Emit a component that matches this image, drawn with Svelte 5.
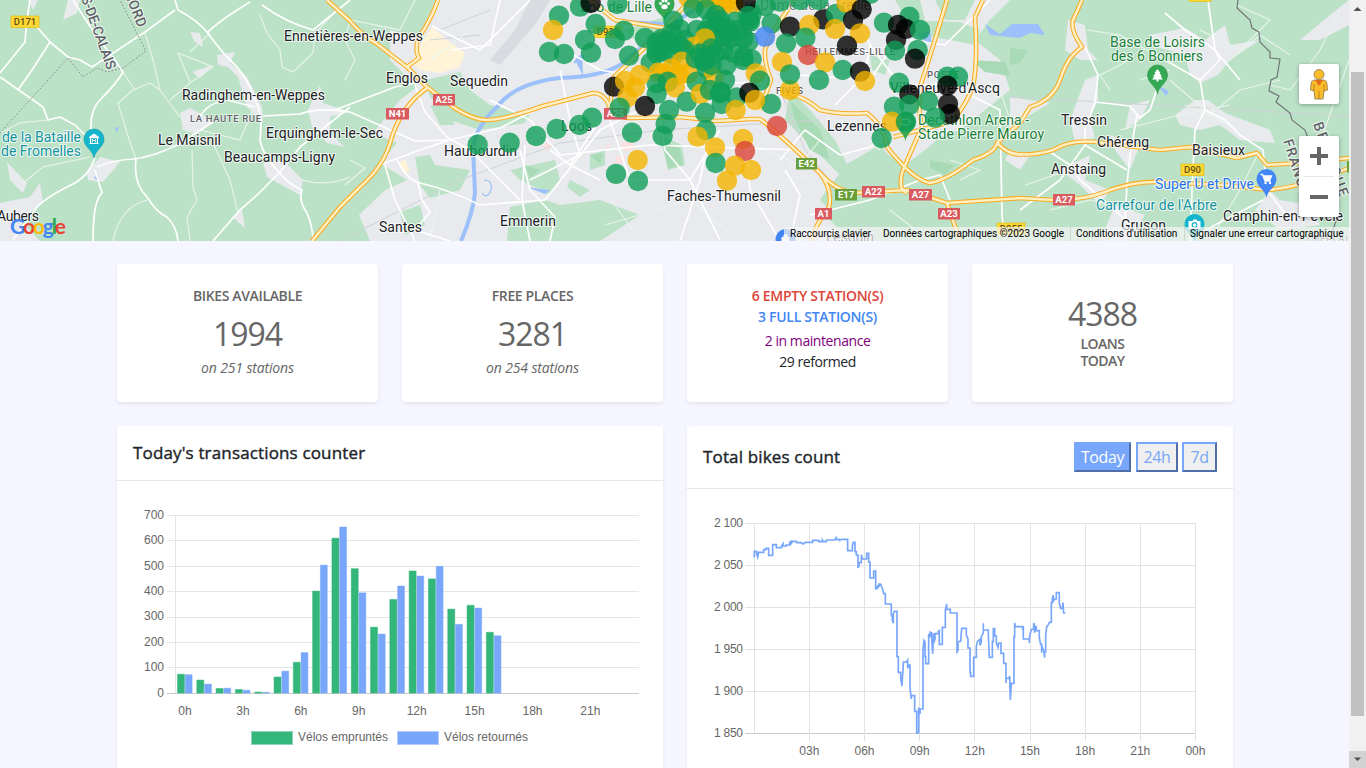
<script>
  const colors = { g: '#0f9d58', y: '#f4b400', k: '#000000', r: '#db4437', b: '#4285f4' };

  // Stations are grouped by district; each group has an origin and third-of-pixel offsets.
  const districts = [
    {
      x: 340, y: 0,
      pts: 'g413,434 g509,428 g657,47 y639,90'
    },
    {
      x: 530, y: 0,
      pts: 'g150,20 k182,9 g197,72 g262,12 g165,120 g183,158 g57,156 g102,162 g282,92 g255,117 g297,167 g345,114 ' +
        'y475,-8 y505,2 y540,-6 y570,8 y600,-4 y580,15 y555,-10 y610,10 g430,62 g425,100 g395,116 g380,128 g362,188 g398,155 g380,160 g380,150 g450,88 g465,120 g430,165 g405,135 g408,120 ' +
        'g490,25 g528,28 g558,45 g560,75 g545,65 g590,85 g615,65 g658,60 g665,42 g655,125 g625,90 g600,115 g575,110 g550,100 g500,90 g570,60 g530,92 g595,100 g640,115 ' +
        'y492,140 g530,140 g462,148 g450,140 y525,115 y400,220 y425,205 y455,185 y475,220 y385,218 y447,225 g497,175 g522,185 g530,205 y550,230 g510,160 g525,180 g555,160 g580,150 g545,145 g610,158 ' +
        'g640,180 g590,195 g665,178 g640,170 g545,195 g585,240 g500,245 g380,250 g413,245 y435,262 g380,282 g470,305 y512,282 g540,270 g573,275 g570,280 g575,312 g620,292 y617,330 ' +
        'g525,338 g417,330 g407,372 g398,408 k252,260 y285,243 y330,225 y315,262 y292,292 g269,323 k345,318 g186,353 g148,375 g80,387 g18,408 g306,398 ' +
        'y323,480 g258,522 g324,543 g528,390 y503,410 y555,442 g557,489 y639,417 r645,453 y615,497 y663,510 y591,542 k648,8'
    },
    {
      x: 740, y: 0,
      pts: 'g75,18 g30,65 g25,48 g95,70 g120,5 g180,0 g235,0 k150,80 k250,58 y208,75 g288,42 y320,8 g390,-18 k365,28 k339,60 y285,87 y360,100 g196,113 g138,130 b75,110 ' +
        'k321,137 r204,165 y255,187 y126,186 y150,270 g150,223 g237,240 g308,210 k360,215 y375,243 g93,312 r111,378 y47,220 g60,242 k28,278 y45,300 ' +
        'g432,68 g508,50 k474,75 k497,87 g540,90 k468,120 g465,152 g533,150 k525,176 g477,248 k508,283 g564,303 g622,230 g654,230 k622,257 k624,312 ' +
        'k630,342 g585,353 g462,320 g508,315 y456,365 g498,365 g425,414'
    }
  ];
  const stations = districts.flatMap((d) =>
    d.pts.split(' ').map((s) => {
      const [a, b] = s.slice(1).split(',').map(Number);
      return { c: colors[s[0]], x: d.x + a / 3, y: d.y + b / 3 };
    })
  );

  const towns = [
    ['Ennetières-en-Weppes', 284, 41, 139], ['Radinghem-en-Weppes', 182, 100, 143], ['Le Maisnil', 158, 145, 63],
    ['Erquinghem-le-Sec', 266, 138, 117], ['Beaucamps-Ligny', 224, 162, 111], ['Aubers', -3, 221, 42],
    ['Englos', 386, 83, 42], ['Sequedin', 450, 86, 58], ['Haubourdin', 444, 156, 73], ['Loos', 561, 131, 31],
    ['Santes', 379, 232, 43], ['Emmerin', 500, 226, 56], ['Faches-Thumesnil', 667, 201, 114],
    ['Lezennes', 827, 131, 60], ["Villeneuve-d'Ascq", 890, 93, 110], ['Tressin', 1061, 125, 46],
    ['Chéreng', 1097, 147, 52], ['Baisieux', 1192, 155, 53], ['Anstaing', 1051, 174, 55],
    ['Camphin-en-Pévèle', 1223, 221, 120], ['Gruson', 1121, 230, 45], ['Lesquin', 826, 242, 48]
  ];
  const faded = [['Notre-Dame-de-la-Treille', 722, 10, 149], ['Lille', 676, 66, 33]];
  const areas = [
    ['LA HAUTE RUE', 190, 122, 71], ['HELLEMMES-LILLE', 805, 55, 90], ['POSTE', 927, 78, 32], ['FIVES', 776, 94, 27], ['LILLE', 727, 34, 28], ['CREPLAINE', 1307, 242, 54]
  ];
  const pois = [
    ['de la Bataille', 2, 142, 79, '#12939e'], ['de Fromelles', 1, 156, 80, '#12939e'],
    ['Zoo de Lille', 580, 12, 72, '#188038'],
    ['Base de Loisirs', 1110, 47, 95, '#188038'], ['des 6 Bonniers', 1111, 61, 92, '#188038'],
    ['Decathlon Arena -', 918, 125, 111, '#188038'], ['Stade Pierre Mauroy', 918, 139, 126, '#188038'],
    ['Super U et Drive', 1155, 189, 99, '#1a73e8'], ["Carrefour de l'Arbre", 1096, 210, 121, '#12939e']
  ];
  const shields = [
    ['D171', 11, 16, 28, 'd'], ['A25', 433, 94, 22, 'a'], ['N41', 386, 108, 23, 'a'], ['D933', 594, 26, 28, 'd'],
    ['A25', 604, 108, 23, 'a'], ['E42', 796, 158, 21, 'e'], ['E17', 835, 189, 22, 'e'], ['A22', 862, 186, 23, 'a'],
    ['A27', 909, 189, 23, 'a'], ['A1', 815, 208, 17, 'a'], ['A23', 938, 208, 22, 'a'], ['A27', 1053, 194, 22, 'a'],
    ['D90', 1181, 164, 23, 'd'], ['D955', 997, 223, 28, 'd'], ['', 1189, -10, 22, 'd'], ['', 1347, 161, 10, 'e']
  ];
  const shieldFill = { d: '#fdd835', a: '#d95b5f', e: '#689f38' };

  const majors = [
    // western motorway, north spur and southern branch
    'M327 0L349 20Q365 38 377 44L407 67L427 87L453 107Q473 120 487 120Q503 120 543 106L593 93Q605 93 610 108Q614 117 630 118L680 117L717 121L750 119L760 119Q775 130 820 173Q835 190 853 193L907 190L947 203L1020 198L1053 200Q1087 200 1110 190Q1137 181 1157 182L1223 185L1270 190Q1310 185 1349 168',
    'M438 0Q430 22 419 37Q414 50 419 58L407 67',
    'M427 88Q400 107 390 143Q383 167 360 187L340 207Q325 225 312 241',
    'M610 108L613 78L665 28L690 0', 'M665 28L615 20L590 0', 'M820 173Q833 190 829 207Q815 225 811 241', 'M947 203L960 241',
    'M947 0Q930 57 920 87Q918 110 922 127Q907 160 902 173Q898 190 907 193',
    'M983 0L975 17Q978 60 973 87Q960 117 947 123L893 137',
    'M795 0Q770 33 765 50Q764 63 771 80L760 110', 'M780 93Q800 93 820 110Q840 115 867 113Q885 127 887 147Q913 180 930 183Q947 180 973 160Q995 153 997 143L1020 123L1030 107Q1053 100 1060 80Q1067 57 1082 47Q1070 30 1073 20L1082 0',
    'M1010 153Q1030 157 1053 150Q1073 138 1103 143L1160 150L1190 147L1237 158L1257 153L1267 165L1300 163L1349 158',
    'M997 143Q1010 156 1022 154'
  ];
  const minors = [
    'M175 0L178 10Q197 20 207 32Q220 50 230 60Q247 75 255 100Q263 113 260 140Q263 157 280 173Q287 183 302 190Q298 200 307 213Q313 227 313 241',
    'M0 73L25 42L27 20L30 0', 'M73 0L97 37L115 60L123 72Q117 83 100 100Q90 110 91 130',
    'M37 27L50 42L68 57L80 60L92 67L145 32L175 10', 'M50 42L32 70L18 90', 'M0 77L43 107L48 120L60 117L75 125L90 140',
    'M95 157Q90 177 67 187Q47 197 37 207L13 240', 'M97 167Q113 160 133 159Q153 157 177 145L213 122', 'M95 170L102 193Q93 200 93 241',
    'M136 159Q133 183 147 197Q157 213 167 217Q177 227 178 241', 'M213 241L240 210Q260 193 267 185L280 172L300 147L350 107',
    'M263 116L300 114Q320 107 350 112', 'M200 117Q207 103 227 100L255 107', 'M207 33Q220 20 250 2', 'M262 5Q285 22 313 30L350 0',
    'M335 110L395 87L420 82', 'M350 112L415 141L450 140L500 128L555 100', 'M415 85L425 112L447 137L470 150L500 180L520 200',
    'M380 165L420 150L450 140', 'M385 165L395 200L415 241', 'M397 160Q407 180 420 183Q450 190 480 205L545 200L600 130L680 90',
    'M418 183L422 200L430 212L415 230L450 241', 'M525 145L522 200L530 241', 'M520 150L530 190L555 217L550 241', 'M490 100L530 120L560 155L650 145L800 150',
    'M432 26L480 50L530 0', 'M450 50L490 45L500 0', 'M560 70L570 120L580 155L530 180', 'M565 50L600 70L690 85L760 82',
    'M610 120L630 180L690 180L720 240', 'M570 165L600 120M550 150L570 165L600 180', 'M660 120L665 150L690 180L720 130', 'M710 135L700 180L680 241',
    'M745 130L750 190L780 241', 'M780 160L805 130L840 155L870 147L893 135', 'M785 170L800 195L790 241', 'M800 75L870 80L890 50', 'M870 45L900 85L950 85L1000 110L1002 215L1005 241',
    'M850 0L870 45L865 75L835 105', 'M910 40L945 45L990 0', 'M810 215L870 200L920 180L940 175L950 200', 'M1085 47L1098 75L1095 102L1130 106L1140 118L1150 110L1160 80',
    'M1095 102L1085 130L1085 145L1060 180L1020 210', 'M1050 152L1070 165L1080 180L1115 210L1130 225', 'M1137 115L1130 155L1127 185L1125 220', 'M1085 145L1127 170',
    'M1165 60L1200 80L1205 110L1195 130L1192 190L1190 241', 'M1205 110L1225 120L1240 135L1263 150L1267 190L1290 220', 'M1165 13L1185 30L1215 50L1220 60L1200 80', 'M1208 0L1215 50L1240 80', 'M1263 200L1215 225L1190 241'
  ];
  const lanes = [
    'M260 15L267 33L280 50L282 67L293 72L313 53L315 33L337 10', 'M145 33L153 60L160 90L180 117', 'M118 103L133 90L150 83L160 90', 'M118 103L127 133L136 159',
    'M192 150L193 187L197 200L187 217L190 241', 'M213 143L230 180L238 213', 'M113 241Q120 207 147 200', 'M170 100L190 83L213 67L178 53L190 82', 'M0 133L20 123L47 120', 'M23 183L43 167L90 157',
    'M302 180Q327 187 350 177', 'M345 80L355 60L345 40L350 20L400 30L415 0', 'M350 160L365 168L345 185', 'M210 33L190 52M255 105L240 140L200 130', 'M375 25L400 30', 'M430 60L470 30', 'M440 190L430 241', 'M120 68L135 90',
    'M640 150L655 130M665 80L700 110L690 60', 'M740 140L800 165L820 140', 'M760 20L830 30L840 70', 'M800 30L805 80', 'M770 185L800 160', 'M780 180L815 175', 'M860 140L880 150', 'M890 210L930 241',
    'M950 160L980 170L960 180', 'M960 60L1000 90L1010 120', 'M1087 30L1120 35L1165 60', 'M1110 90L1100 75L1130 60', 'M1170 70L1140 80', 'M1200 30L1240 50L1270 20L1237 5', 'M1170 80L1210 115', 'M1185 105L1230 125',
    'M1270 85L1290 90L1320 50L1340 10', 'M1300 200L1349 60', 'M1230 60L1260 35L1290 55', 'M1050 210L1090 200L1110 205', 'M1280 80L1240 90L1210 115', 'M1120 130L1180 115L1230 105', 'M1025 185L1070 170', 'M600 185L640 240M605 225L690 200L740 241', 'M1210 240L1240 190L1260 150'
  ];

  const borrowed = [75, 52, 19, 15, 5, 64, 122, 402, 610, 490, 260, 369, 481, 450, 331, 346, 240];
  const returned = [73, 36, 20, 12, 4, 87, 160, 504, 654, 395, 233, 422, 461, 499, 271, 335, 226];
  const step = 463.3 / 24;
  const barTop = (v) => 693.3 - v * 0.2543;
  const barTicks = [0, 100, 200, 300, 400, 500, 600, 700];
  const lineTicks = ['2 100', '2 050', '2 000', '1 950', '1 900', '1 850'];
  const hours = ['', '03h', '06h', '09h', '12h', '15h', '18h', '21h', '00h'];
  const totals =
    'M193 172V154H200V162L203 171L206 157H221V149H228V145H236V166H248V134H259V143H275V137L279 131V138H289V135H299V127L304 124V130L308 124H320V128H333L340 132L346 127H368V121H386V125H397V120L400 125H409V120H434L438 114V118H448V121L457 118H473V152H487V140L490 127H495V155H499V165H504V204L507 198V188H514V164L517 177H530V160H536V186H540V234H551V213H557V266H561L564 256V265L568 250V257L572 253L577 264L581 281H586V312H604V347L607 350V361L610 370V341L613 334H621V470H625V517H632V533L636 558L640 490V486H650L653 481V505L657 495H660V563L664 597V587H674V634H680V699H686V623L690 642V627H699V452L702 421L705 425V453V444V470H707V491H716V401L719 412L721 394V410L725 396V413L728 461L731 400V430L735 418V401H745V394L748 392V433H757V390V382H766V330L768 322L770 312V328H781V339H801V460V439L804 454V427L808 424H812L815 385H829V406L834 417V444H840V517H842V529H851V472H859V438L863 424L870 418V436L874 427V411L880 398V370V390H895V405L898 472H907V425H910V386H914V408H919V429L924 442L926 429H933V460H941V490H948V549V535H956L959 528L961 600L964 550H972V410H974V369L976 380H998V390L1000 379V417H1018V429L1019 408L1024 388H1031V369L1035 380L1033 398L1039 378V392H1048V413L1052 433H1055V458V437L1059 447L1062 455V460L1064 473V455H1067V407L1070 381L1075 374L1078 367H1084V308H1087V294L1090 286V303L1095 297H1099V278H1108V310L1112 325H1117L1119 308L1121 339H1126';
</script>

<div class="window">
  <div class="page">
    <div class="map">
      <svg class="canvas" width="1349" height="241" viewBox="0 0 1349 241">
        <rect width="1349" height="241" fill="#bbe2c6" />
        <g fill="#e8eaed">
          <path d="M437 0H1010L990 20L975 40L1000 60L1010 90L985 110L960 130L940 137L925 150L905 165L880 150L850 165L830 185L820 200L835 215L850 241H600L640 215L600 200L560 205L545 200L510 207L507 241H370L359 215L385 190L407 180L380 163L397 143L373 133L400 100L417 87L390 60V30L418 37Z" />
          <path d="M217 55L235 52L230 63L247 77L262 107L263 123L247 107L238 77L228 67L218 65Z" />
          <path d="M192 72L213 65L200 78ZM190 32L200 33L203 47L195 42ZM180 113L190 108L203 115L213 123L193 133L183 130ZM263 163L283 160L303 180L300 195L267 177ZM87 173L100 157L120 162L103 182L88 180ZM0 203L30 197L40 183L43 203L20 220L40 241H0ZM7 162L27 183L23 193L10 180ZM28 0H38L33 10ZM68 0H80L77 13L63 20ZM308 110L320 85L323 103L350 112L330 117L330 133L345 147L327 143L312 127ZM232 217L242 210L245 228Z" />
          <path d="M1068 20L1085 25L1088 50L1098 60L1080 60L1065 50ZM1085 80L1097 75L1098 100L1090 118L1095 138L1075 143L1070 120ZM1150 35L1185 28L1205 40L1225 25L1230 45L1260 40L1230 60L1218 75L1200 83L1190 75L1185 55L1150 45ZM1195 100L1208 100L1225 113L1270 130L1275 143L1240 140L1220 125L1200 130L1180 125L1175 115ZM1130 105L1150 100L1140 120L1125 130ZM1060 170L1090 155L1085 180L1110 190L1100 205L1080 185ZM1115 205L1145 215L1130 241H1100ZM1270 190L1280 200L1310 205L1320 225L1280 230L1255 210ZM1300 40L1330 15L1349 0V25L1320 40ZM1010 97L1050 103L1030 115L1010 130ZM1010 150L1030 155L1020 170L1005 160ZM1110 135L1140 145L1130 170L1115 150Z" />
        </g>
        <g fill="#bbe2c6">
          <path d="M425 80L460 72L470 90L490 105L530 115L525 123L480 130L450 120L430 97ZM430 105L445 107L455 125L440 125ZM415 157L430 155L435 165L470 170L460 190L430 198L420 185ZM350 150L372 145L380 165L360 178L345 195V150ZM510 170L555 160L560 180L550 195L520 180ZM900 20L960 22L980 30L975 45L950 40L920 35ZM790 90L810 110L835 140L850 170L840 175L815 150L785 120ZM845 165L880 145L900 170L905 190L850 190L833 183ZM825 195L905 195L930 205L945 241H850L830 220ZM590 155L605 150L605 165L590 170ZM660 135L682 145L685 165L668 170ZM625 30L670 15L680 25L640 45ZM895 0H920L925 20L910 25ZM935 0H975L965 20H945ZM570 180L590 190L580 197L567 187ZM870 55L890 60L885 75L872 70ZM400 212L420 205L425 225L405 235Z" />
        </g>
        <g fill="#a8dab5"><path d="M790 100L820 130L830 160L810 150L795 120ZM662 140L680 148L683 165L668 168ZM930 160L955 165L945 175L930 168ZM1010 48L1028 50L1020 63L1010 65ZM972 60L1005 62L1010 76L985 72ZM590 155L603 153L600 164ZM525 165L540 170L530 178Z" /></g>
        <path d="M432 27L447 40L465 53L460 67L440 73L420 70L412 62L423 40ZM398 163L405 160L410 170L405 174Z" fill="#fff4d8" />
        <path d="M490 60L515 30L530 0H550L535 25L500 65Z" fill="#d8dce0" />
        <path d="M621 143L633 141L634 150L624 152ZM616 157L626 155L624 163L615 164ZM605 146L611 143L609 148ZM543 146L550 142L552 147L547 151Z" fill="#fce0e0" />
        <g fill="none" stroke="#cfd3d6"><path d="M340 241L460 180L560 143L660 130L820 120M780 90L805 150L850 205L880 241M1010 97L1349 116M440 30L490 10M430 40L480 35" /></g>
        <g fill="none" stroke="#9cc0f9" stroke-linejoin="round">
          <path d="M710 0L665 28L620 65Q600 77 560 78Q515 83 497 107Q477 125 473 147L475 193Q473 213 461 241" stroke-width="4" />
          <path d="M574 63L582 55M583 62V55" stroke-width="2" />
          <path d="M484 180Q493 180 491 190Q487 200 482 193M531 188L547 192" stroke-width="1.2" />
        </g>
        <path d="M575 60L582 53L583 75L580 70ZM530 188L550 190L545 194ZM985 24L1000 34L1012 24L1038 24L1045 35L1030 33L1020 38L990 35ZM1158 86L1169 91L1166 96ZM915 35L930 30L932 45ZM622 20L665 22L660 30L632 24ZM94 178L98 174L97 180ZM115 128L119 127L117 133Z" fill="#9cc0f9" />
        <g fill="none" stroke="#e9f4ec" stroke-width="1.1">{#each lanes as d}<path {d} />{/each}</g>
        <g fill="none" stroke="#ffffff" stroke-width="1.7" stroke-linejoin="round">{#each minors as d}<path {d} />{/each}</g>
        <g fill="none" stroke="#f9ab1f" stroke-width="4.6" stroke-linejoin="round">{#each majors as d}<path {d} />{/each}</g>
        <g fill="none" stroke="#feefc3" stroke-width="2.5" stroke-linejoin="round">{#each majors as d}<path {d} />{/each}</g>
        <path d="M0 133L68 58L83 77L97 68L107 72L123 68L146 51L120 0" fill="none" stroke="#80868b" stroke-dasharray="1.5 2" />
        <path d="M1238 0L1237 8L1250 20L1252 28L1259 32L1260 42L1270 52V58L1280 59L1277 77L1271 80L1269 91L1279 96L1276 102L1290 113L1292 120L1305 130L1308 138M1338 215L1332 233" fill="none" stroke="#70757a" stroke-width="1.2" />

        {#each shields as [name, x, y, w, kind]}
          <rect {x} {y} width={w} height="11.5" fill={shieldFill[kind]} stroke={kind === 'd' ? '#e2b600' : 'none'} stroke-width=".6" />
          {#if name}<text class="shield" class:dark={kind === 'd'} x={x + w / 2} y={y + 9.4}>{name}</text>{/if}
        {/each}
        <g class="area">{#each areas as [name, x, y, w]}<text {x} {y} textLength={w}>{name}</text>{/each}</g>
        <g class="town">{#each towns as [name, x, y, w]}<text {x} {y} textLength={w}>{name}</text>{/each}</g>
        <g class="town" fill-opacity=".6">{#each faded as [name, x, y, w]}<text {x} {y} textLength={w}>{name}</text>{/each}</g>
        <g class="poi">{#each pois as [name, x, y, w, fill]}<text {x} {y} textLength={w} {fill}>{name}</text>{/each}</g>
        <g class="border-name">
          <text transform="translate(81 -2) rotate(70)" textLength="77">S-DE-CALAIS</text>
          <text transform="translate(124 -7) rotate(68)" textLength="38">NORD</text>
          <text transform="translate(1313 124) rotate(70)" textLength="78">BELGIQUE</text>
          <text transform="translate(1283 141) rotate(72)" textLength="58">FRANCE</text>
        </g>

        <g transform="translate(94 139)"><path d="M0 19C-1 11-10 8-10 0A10 10 0 0 1 10 0C10 8 1 11 0 19Z" fill="#12b5cb" stroke="#0d98aa" stroke-width=".6" /><path d="M-5-2L0-5.500L5-2V-.8H-5ZM-4.500 4H4.500V5H-4.500ZM-4-.5H-3V4H-4ZM3-.5H4V4H3Z" fill="#fff" /><path d="M-1.700 3.500V.3L0 2L1.700 .3V3.500" fill="none" stroke="#fff" /></g>
        <g transform="translate(664.500 4)"><path d="M0 17C-1 11-10 8-10 0A10 10 0 0 1 10 0C10 8 1 11 0 17Z" fill="#34a853" /><g fill="#fff"><circle cx="-4" cy="-.5" r="1.500" /><circle cx="-1.500" cy="-3" r="1.500" /><circle cx="1.500" cy="-3" r="1.500" /><circle cx="4" cy="-.5" r="1.500" /><ellipse cy="2.700" rx="3.200" ry="2.500" /></g></g>
        <g transform="translate(1157.500 75)"><path d="M0 19C-1 11-10 8-10 0A10 10 0 0 1 10 0C10 8 1 11 0 19Z" fill="#34a853" stroke="#23903f" stroke-width=".6" /><path d="M0-6L3-2H2L4.500 1.500H3L5.500 4.500H1V6.500H-1V4.500H-5.500L-3 1.500H-4.500L-2-2H-3Z" fill="#fff" /></g>
        <g transform="translate(905.500 122)"><path d="M0 19C-1 11-10 8-10 0A10 10 0 0 1 10 0C10 8 1 11 0 19Z" fill="#34a853" /><ellipse rx="5" ry="3" fill="none" stroke="#fff" /></g>
        <g transform="translate(1266.500 179)"><path d="M0 19C-1 11-10 8-10 0A10 10 0 0 1 10 0C10 8 1 11 0 19Z" fill="#4285f4" /><path d="M-6-4.500H-4L-1.500 2H4M-3.500-3H5L3.500 .5H-2" fill="none" stroke="#fff" stroke-width="1.300" /><path d="M-3.500-3H5L3.500 .5H-2Z" fill="#fff" /><circle cx="-1" cy="4" r="1.200" fill="#fff" /><circle cx="3.500" cy="4" r="1.200" fill="#fff" /></g>
        <g transform="translate(1194.500 224)"><path d="M0 19C-1 11-10 8-10 0A10 10 0 0 1 10 0C10 8 1 11 0 19Z" fill="#12b5cb" /><path d="M-6-3H-2L-1-4.500H2L3-3H6V5H-6Z" fill="#fff" /><circle cx="0" cy="1" r="2.300" fill="none" stroke="#12b5cb" stroke-width="1.200" /></g>
        <g transform="translate(785.500 239)"><circle r="10" fill="#4285f4" /><path d="M-4-2H4V6H-4ZM-2-2V-4Q0-6 2-4V-2" fill="#fff" /></g>

        <g fill-opacity=".8">{#each stations as s}<circle cx={s.x} cy={s.y} r="10.200" fill={s.c} />{/each}</g>
        <text class="google" x="10" y="234" textLength="56"><tspan fill="#4285f4">G</tspan><tspan fill="#ea4335">o</tspan><tspan fill="#fbbc04">o</tspan><tspan fill="#4285f4">g</tspan><tspan fill="#34a853">l</tspan><tspan fill="#ea4335">e</tspan></text>
      </svg>
      <div class="controls">
        <div class="pegman">
          <svg width="20" height="32" viewBox="0 0 20 32"><path d="M5 12Q2 13 2 16L1.500 22L5 23L6 31H14L15 23L18.500 22L18 16Q18 13 15 12Z" fill="#fbbc2c" stroke="#8a7447" stroke-width=".8" /><path d="M10 23V31M5 16V23M15 16V23" stroke="#a77717" stroke-width=".8" /><path d="M6 12L10 18L14 12Z" fill="#e06d1b" /><circle cx="10" cy="6.500" r="5" fill="#fbbc2c" stroke="#8a7447" stroke-width=".8" /></svg>
        </div>
        <div class="zoom">
          <svg width="40" height="40" viewBox="0 0 40 40"><path d="M11 20H29M20 11V29" stroke="#666" stroke-width="4" /></svg>
          <i></i>
          <svg width="40" height="40" viewBox="0 0 40 40"><path d="M11 20H29" stroke="#666" stroke-width="4" /></svg>
        </div>
      </div>
      <div class="legal"><span class="keys">Raccourcis clavier</span><span class="data">Données cartographiques ©2023 Google</span><span class="terms">Conditions d'utilisation</span><span class="report">Signaler une erreur cartographique</span></div>
    </div>

    <main>
      <section class="card stat"><h4>BIKES AVAILABLE</h4><strong>1994</strong><em>on 251 stations</em></section>
      <section class="card stat"><h4>FREE PLACES</h4><strong>3281</strong><em>on 254 stations</em></section>
      <section class="card stat status"><h4 class="red">6 EMPTY STATION(S)</h4><h4 class="blue">3 FULL STATION(S)</h4><p class="purple">2 in maintenance</p><p>29 reformed</p></section>
      <section class="card stat loans"><strong>4388</strong><h4>LOANS<br />TODAY</h4></section>

      <section class="card chart">
        <header><h2>Today's transactions counter</h2></header>
        <svg width="546" height="300" viewBox="117 481 546 300">
          <g shape-rendering="crispEdges">
            {#each barTicks as t}<path d="M167 {Math.floor(barTop(t)) + 0.5}H639" stroke={t ? '#e5e5e5' : '#c9c9c9'} />{/each}
            <path d="M175.500 515V693" stroke="#e5e5e5" />
          </g>
          {#each barTicks as t}<text x="164" y={barTop(t) + 3.4} text-anchor="end">{t}</text>{/each}
          {#each borrowed as v, i}
            <rect x={177.500 + i * step} y={barTop(v)} width="7" height={v * 0.2543} fill="#33b679" />
            <path d="M{177.500 + i * step} 693V{barTop(v)}h7V693" fill="none" stroke="#33b679" stroke-opacity=".5" />
          {/each}
          {#each returned as v, i}
            <rect x={185.300 + i * step} y={barTop(v)} width="6.800" height={v * 0.2543} fill="#77a6fb" />
            <path d="M{185.300 + i * step} 693V{barTop(v)}h6.800V693" fill="none" stroke="#77a6fb" stroke-opacity=".5" />
          {/each}
          {#each [0, 3, 6, 9, 12, 15, 18, 21] as h}<text x={185 + h * step} y="715" text-anchor="middle">{h}h</text>{/each}
          <rect x="251.500" y="731.500" width="41" height="13" fill="#33b679" stroke="#8fd5b4" />
          <text x="298" y="741" textLength="90">Vélos empruntés</text>
          <rect x="397.500" y="731.500" width="41" height="13" fill="#77a6fb" stroke="#b1ccfd" />
          <text x="444" y="741" textLength="84">Vélos retournés</text>
        </svg>
      </section>

      <section class="card chart">
        <header class="tall">
          <h2>Total bikes count</h2>
          <div class="ranges"><button class="active">Today</button><button class="day">24h</button><button class="week">7d</button></div>
        </header>
        <svg width="546" height="292" viewBox="687 489 546 292">
          <g shape-rendering="crispEdges">
            {#each lineTicks as _, i}<path d="M745 {523.500 + i * 42}H1196" stroke={i === 5 ? '#c9c9c9' : '#e2e2e2'} />{/each}
            {#each hours as _, i}<path d="M{Math.round(753.8 + i * 55.15) + 0.5} 523V{i ? 741 : 733}" stroke="#e2e2e2" />{/each}
          </g>
          {#each lineTicks as t, i}<text x="743" y={527 + i * 42} text-anchor="end" textLength="29">{t}</text>{/each}
          {#each hours as h, i}<text x={754.200 + i * 55.15} y="755" text-anchor="middle">{h}</text>{/each}
          <g transform="translate(690 500) scale(.33333)"><path d={totals} fill="none" stroke="#77a6fb" stroke-width="5" /></g>
        </svg>
      </section>
    </main>
  </div>

  <div class="scrollbar">
    <svg width="17" height="17" viewBox="0 0 17 17"><path d="M4.500 11L8.500 7L12.500 11Z" fill="#505050" /></svg>
    <div class="thumb"></div>
    <svg class="down" width="17" height="17" viewBox="0 0 17 17"><path d="M5 6.500H12L8.500 10Z" fill="#505050" /></svg>
  </div>
</div>

<style>
  :global(body) { overflow: hidden; background: #f5f6ff; }
  .window { display: flex; width: 1366px; height: 768px; overflow: hidden; font-family: 'Open Sans', 'Noto Sans', sans-serif; color: #212529; background: #f5f6ff; }
  .page { width: 1349px; height: 768px; overflow: hidden; }
  .map { position: relative; height: 241px; overflow: hidden; font-family: Roboto, sans-serif; }
  .canvas { display: block; }
  .town text, .poi text { font-size: 14px; paint-order: stroke; stroke: #fff; stroke-opacity: .8; stroke-width: 2px; stroke-linejoin: round; }
  .town text { fill: #202124; }
  .area text { font-size: 9.500px; font-weight: 500; fill: #5f6368; paint-order: stroke; stroke: #fff; stroke-width: 1.500px; stroke-opacity: .7; }
  .border-name text { font-size: 14px; font-weight: 500; fill: #5f6368; paint-order: stroke; stroke: #fff; stroke-width: 2px; stroke-opacity: .7; }
  .shield { font-size: 9.500px; font-weight: 700; fill: #fff; text-anchor: middle; }
  .shield.dark { fill: #624d13; font-weight: 500; }
  .google { font-family: Lato, sans-serif; font-size: 21px; font-weight: 700; }
  .controls { position: absolute; right: 10px; top: 64px; width: 40px; display: flex; flex-direction: column; gap: 32px; }
  .pegman, .zoom { background: #fff; border-radius: 2px; box-shadow: 0 1px 4px rgba(0, 0, 0, .3); display: flex; flex-direction: column; align-items: center; }
  .pegman { height: 40px; justify-content: center; }
  .zoom i { width: 30px; height: 1px; background: #e6e6e6; }
  .legal { position: absolute; right: 0; bottom: 0; height: 14px; display: flex; font: 10px/14px Roboto, sans-serif; color: #000; white-space: nowrap; }
  .legal span { box-sizing: border-box; padding-left: 6px; background: rgba(245, 245, 245, .7); border-left: 1px solid rgba(200, 210, 205, .8); }
  .legal .keys { width: 93px; border-left: 0; }
  .legal .data { width: 193px; border-left: 0; }
  .legal .terms { width: 114px; padding-left: 5px; }
  .legal .report { width: 165px; padding-left: 5px; }
  main { display: grid; grid-template-columns: repeat(4, 261px); gap: 24px; padding: 23px 0 0 117px; }
  .card { background: #fff; border-radius: 4px; box-shadow: 0 2px 4px rgba(0, 0, 0, .075); }
  .stat { height: 138px; box-sizing: border-box; padding-top: 21px; display: flex; flex-direction: column; align-items: center; color: #666; text-align: center; }
  h4, h2, p { margin: 0; }
  h4 { font-size: 14px; line-height: 21px; font-weight: 600; letter-spacing: -.360px; }
  strong { font-size: 32px; line-height: 38px; font-weight: 400; letter-spacing: -1.100px; margin-top: 9px; }
  em { font-size: 14px; line-height: 21px; letter-spacing: -.150px; margin-top: 4px; }
  .status p { font-size: 14px; line-height: 21px; letter-spacing: -.430px; color: #212529; }
  .status .purple { color: #800080; margin-top: 3px; }
  h4.red { color: #db4437; letter-spacing: -.260px; }
  h4.blue { color: #4285f4; letter-spacing: -.300px; }
  .loans strong { margin-top: 10px; }
  .loans h4 { line-height: 17px; margin-top: 2px; letter-spacing: -.500px; }
  .chart { grid-column: span 2; height: 360px; }
  .chart > svg { display: block; }
  .chart text { font: 12px 'Liberation Sans', Arial, sans-serif; fill: #666; }
  header { box-sizing: border-box; height: 55px; padding: 0 16px; border-bottom: 1px solid #e6e6e6; display: flex; align-items: center; justify-content: space-between; }
  header.tall { height: 63px; }
  h2 { font-size: 17px; font-weight: 400; -webkit-text-stroke: .4px #212529; letter-spacing: .150px; line-height: 24px; color: #212529; }
  .ranges { display: flex; gap: 4px; }
  button { height: 30px; padding: 0; border: 2px outset #77a6fb; background: #efefef; color: #77a6fb; font: 16px/24px 'Open Sans', sans-serif; letter-spacing: -.400px; width: 42px; }
  .active { width: 57px; margin-right: 1px; background: #77a6fb; color: #fff; }
  .week { width: 35px; }
  .scrollbar { width: 17px; height: 768px; display: flex; flex-direction: column; align-items: center; background: #f1f1f1; }
  .thumb { width: 13px; height: 644px; margin: 55px 0 35px; background: #c1c1c1; }
  .down { background: #d2d2d2; }
</style>
